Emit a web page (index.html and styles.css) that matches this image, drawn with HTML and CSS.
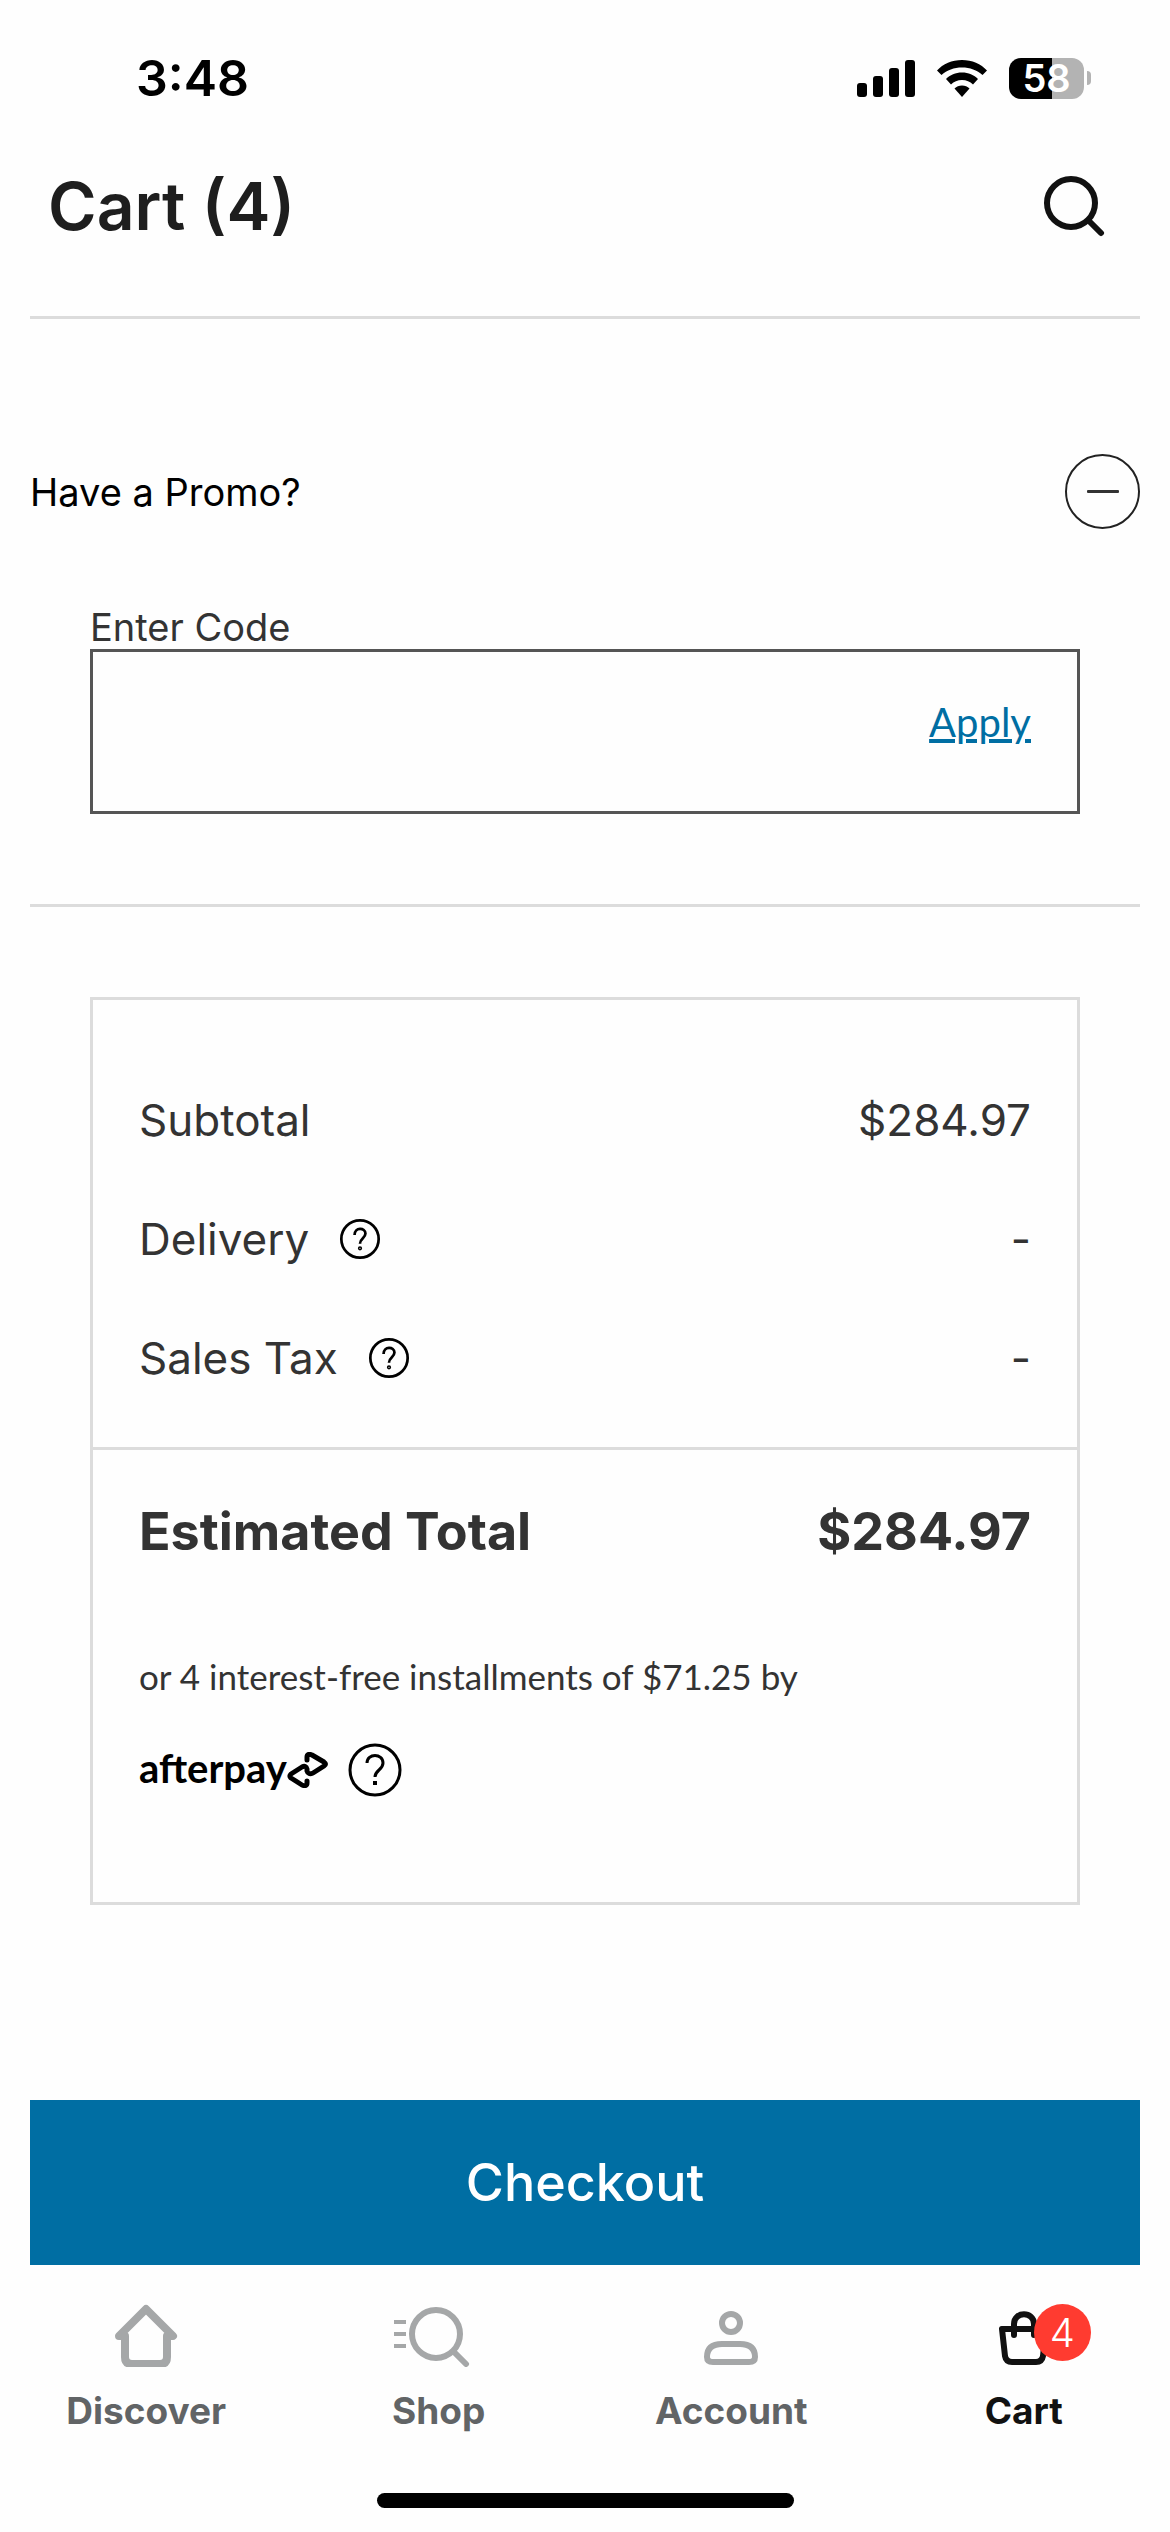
FILE: index.html
```html
<!DOCTYPE html>
<html lang="en">
  <head>
    <meta charset="UTF-8" />
    <meta name="viewport" content="width=device-width, initial-scale=1.0" />
    <title>Cart</title>
    <link rel="stylesheet" href="styles.css">
  </head>
  <body>
    <div class="status-bar">
      <span class="time">3:48</span>
      <div class="status-icons">
        <svg width="58" height="38" viewBox="0 0 58 38">
          <rect x="0" y="24" width="10" height="14" rx="3" />
          <rect x="16" y="17" width="10" height="21" rx="3" />
          <rect x="32" y="9" width="10" height="29" rx="3" />
          <rect x="48" y="1" width="10" height="37" rx="3" />
        </svg>
        <svg width="50" height="38" viewBox="0 0 50 38">
          <path d="M25 1C15 1 6 5 0 11.500L4.500 16C10 11 17 8.500 25 8.500S40 11 45.500 16L50 11.500C44 5 35 1 25 1Z" />
          <path d="M25 13.500C18.500 13.500 13 16 9 20L14 25.500C17 22.500 20.500 21 25 21S33 22.500 36 25.500L41 20C37 16 31.500 13.500 25 13.500Z" />
          <path d="M25 26.500C22 26.500 19.500 27.500 17.500 29.500L25 38L32.500 29.500C30.500 27.500 28 26.500 25 26.500Z" />
        </svg>
        <div class="battery"><span class="battery-level">58</span></div>
      </div>
    </div>

    <header class="header">
      <h1>Cart (4)</h1>
      <button class="icon-button" type="button" aria-label="Search">
        <svg width="62" height="62" viewBox="0 0 62 62" fill="none" stroke="#111" stroke-width="6" stroke-linecap="round">
          <circle cx="28" cy="28" r="24" />
          <path d="M46 46L58 58" />
        </svg>
      </button>
    </header>

    <main>
      <section class="promo">
        <div class="promo-heading">
          <h2>Have a Promo?</h2>
          <button class="collapse" type="button" aria-label="Collapse">
            <svg width="32" height="4" viewBox="0 0 32 4"><rect width="32" height="3" rx="1" fill="#333" /></svg>
          </button>
        </div>
        <form class="promo-form">
          <label for="promoCode">Enter Code</label>
          <div class="promo-field">
            <input type="text" id="promoCode" />
            <a href="#">Apply</a>
          </div>
        </form>
      </section>

      <section class="summary">
        <dl class="lines">
          <div class="line">
            <dt>Subtotal</dt>
            <dd>$284.97</dd>
          </div>
          <div class="line">
            <dt>Delivery
              <button class="icon-button" type="button" aria-label="About delivery">
                <svg width="42" height="42" viewBox="0 0 54 54" fill="none" stroke="#000" stroke-width="3.500">
                  <circle cx="27" cy="27" r="24" />
                  <path d="M20 22C20 11 34 12 34 20C34 26 27 26 27 33" />
                  <circle cx="27" cy="39" r="1" />
                </svg>
              </button>
            </dt>
            <dd>-</dd>
          </div>
          <div class="line">
            <dt>Sales Tax
              <button class="icon-button" type="button" aria-label="About sales tax">
                <svg width="42" height="42" viewBox="0 0 54 54" fill="none" stroke="#000" stroke-width="3.500">
                  <circle cx="27" cy="27" r="24" />
                  <path d="M20 22C20 11 34 12 34 20C34 26 27 26 27 33" />
                  <circle cx="27" cy="39" r="1" />
                </svg>
              </button>
            </dt>
            <dd>-</dd>
          </div>
        </dl>
        <div class="total">
          <div class="total-line">
            <span>Estimated Total</span>
            <span>$284.97</span>
          </div>
          <p>or 4 interest-free installments of $71.25 by</p>
          <div class="afterpay">
            <span>afterpay</span>
            <svg class="afterpay-logo" width="41" height="36" viewBox="0 0 41 36" fill="none" stroke="#000" stroke-width="5" stroke-linejoin="round" stroke-linecap="round">
              <path d="M20 8V5Q20 1 25 3L37 10Q40 12 37 14L26 21Q21 23 20 19V17Q19 13 15 15L4 22Q2 24 4 26L15 33Q20 35 20 31V29" />
            </svg>
            <button class="icon-button" type="button" aria-label="About Afterpay">
              <svg width="54" height="54" viewBox="0 0 54 54" fill="none" stroke="#000" stroke-width="3">
                <circle cx="27" cy="27" r="25" />
                <path d="M19 20C19 10 35 10 35 20C35 27 27 27 27 34" />
                <path d="M25 40H29" stroke-width="4" />
              </svg>
            </button>
          </div>
        </div>
      </section>

      <button class="checkout" type="button">Checkout</button>
    </main>

    <nav class="tabs">
      <a href="#">
        <svg width="66" height="66" viewBox="0 0 66 66" fill="none" stroke="#a5a7a8" stroke-width="8" stroke-linejoin="round" stroke-linecap="round">
          <path d="M6 35L33 8L60 35H54V56Q54 63 47 63H19Q12 63 12 56V35Z" />
        </svg>
        Discover
      </a>
      <a href="#">
        <svg width="92" height="66" viewBox="0 0 92 66" fill="none" stroke="#a5a7a8" stroke-width="6" stroke-linecap="round">
          <circle cx="43" cy="33" r="24" />
          <path d="M61 51L73 63" />
          <path d="M1 21H13M1 33H13M1 45H13" stroke-width="4" stroke-linecap="butt" />
        </svg>
        Shop
      </a>
      <a href="#">
        <svg width="66" height="66" viewBox="0 0 66 66" fill="none" stroke="#a5a7a8" stroke-width="6">
          <circle cx="33" cy="22" r="9" />
          <path d="M24 43H42Q57 43 57 56Q57 61 51 61H15Q9 61 9 56Q9 43 24 43Z" />
        </svg>
        Account
      </a>
      <a class="active" href="#">
        <span class="cart-icon">
          <svg width="66" height="66" viewBox="0 0 66 66" fill="none" stroke="#111" stroke-width="6" stroke-linejoin="round" stroke-linecap="round">
            <path d="M11 28H55L52 55Q51 61 45 61H21Q15 61 14 55Z" />
            <path d="M23 34V23C23 10 43 10 43 23V34" />
          </svg>
          <span class="badge">4</span>
        </span>
        Cart
      </a>
    </nav>
    <div class="home-indicator"></div>
  </body>
</html>
```
FILE: styles.css
```css
* {
  box-sizing: border-box;
}
body {
  display: flex;
  flex-direction: column;
  min-height: 100vh;
  margin: 0;
  background-color: #fefefe;
  color: #333;
  font-family: Inter, "Liberation Sans", sans-serif;
}
h1,
h2,
p,
dl,
dd {
  margin: 0;
}
button {
  padding: 0;
  border: none;
  background: none;
  font-family: inherit;
  cursor: pointer;
}
svg {
  display: block;
}

/* status bar */
.status-bar {
  display: flex;
  justify-content: space-between;
  align-items: center;
  height: 156px;
  padding: 0 79px 0 136px;
  color: #000;
  font-weight: 600;
}
.time {
  font-size: 50px;
}
.status-icons {
  display: flex;
  align-items: center;
  gap: 22px;
}
.battery {
  display: flex;
  align-items: center;
}
.battery-level {
  width: 75px;
  border-radius: 12px;
  background: linear-gradient(to right, #000 57%, #b3b3b3 57%);
  color: white;
  font-size: 38px;
  line-height: 41px;
  text-align: center;
}
.battery::after {
  content: "";
  width: 4px;
  height: 14px;
  margin-left: 3px;
  border-radius: 0 4px 4px 0;
  background-color: #b3b3b3;
}

.header {
  display: flex;
  justify-content: space-between;
  align-items: center;
  margin: 0 30px;
  padding: 0 35px 60px 18px;
  border-bottom: 3px solid #dcdcdc;
}
.header h1 {
  color: #1e1e1e;
  font-size: 66px;
  font-weight: 600;
  line-height: 100px;
}

main {
  padding: 0 30px;
}

/* promo code */
.promo {
  padding: 135px 0 90px;
  border-bottom: 3px solid #dcdcdc;
}
.promo-heading {
  display: flex;
  justify-content: space-between;
  align-items: center;
}
.promo-heading h2 {
  color: #000;
  font-size: 38px;
  font-weight: 400;
}
.collapse {
  display: flex;
  justify-content: center;
  align-items: center;
  width: 75px;
  height: 75px;
  border: 2px solid #222;
  border-radius: 50%;
}
.promo-form {
  margin: 76px 60px 0;
}
.promo-form label {
  display: block;
  font-size: 38px;
  line-height: 44px;
}
.promo-field {
  display: flex;
  align-items: center;
  height: 165px;
  padding-right: 46px;
  border: 3px solid #555;
}
.promo-field input {
  flex: 1;
  min-width: 0;
  height: 100%;
  padding: 0 46px;
  border: none;
  outline: none;
  background: none;
  font-family: inherit;
  font-size: 38px;
}
.promo-field a {
  padding-bottom: 20px;
  color: #006ea3;
  font-family: Lato, sans-serif;
  font-size: 40px;
  line-height: 48px;
}

/* order summary */
.summary {
  margin: 90px 60px 0;
  border: 3px solid #dcdcdc;
}
.lines {
  padding: 60px 46px 30px;
  border-bottom: 3px solid #dcdcdc;
  font-size: 44px;
}
.line {
  display: flex;
  justify-content: space-between;
  align-items: center;
  height: 119px;
}
.line dt {
  display: flex;
  align-items: center;
  gap: 30px;
}
.total {
  padding: 52px 46px 105px;
}
.total-line {
  display: flex;
  justify-content: space-between;
  font-size: 52px;
  font-weight: 700;
  line-height: 60px;
}
.total p {
  margin: 90px 0 43px;
  font-family: Lato, sans-serif;
  font-size: 35px;
  line-height: 48px;
}
.afterpay {
  display: flex;
  align-items: center;
  color: #000;
  font-family: Lato, sans-serif;
  font-size: 40px;
  font-weight: 700;
  line-height: 48px;
}
.afterpay span {
  padding-bottom: 4px;
}
.afterpay-logo {
  margin-right: 20px;
}

.checkout {
  display: block;
  width: 100%;
  height: 165px;
  margin-top: 195px;
  background-color: #006ea3;
  color: white;
  font-size: 52px;
  font-weight: 500;
}

/* bottom navigation */
.tabs {
  display: grid;
  grid-template-columns: repeat(4, 1fr);
  margin-top: auto;
  padding-top: 36px;
}
.tabs a {
  display: flex;
  flex-direction: column;
  align-items: center;
  gap: 22px;
  color: #616466;
  font-size: 37px;
  font-weight: 700;
  line-height: 44px;
  text-decoration: none;
}
.tabs .active {
  color: #111;
}
.cart-icon {
  position: relative;
}
.badge {
  position: absolute;
  top: 3px;
  right: -34px;
  width: 57px;
  height: 57px;
  border-radius: 50%;
  background-color: #ff3b30;
  color: white;
  font-size: 40px;
  font-weight: 300;
  line-height: 57px;
  text-align: center;
}
.home-indicator {
  width: 417px;
  height: 15px;
  margin: 60px auto 24px;
  border-radius: 8px;
  background-color: #000;
}
```
